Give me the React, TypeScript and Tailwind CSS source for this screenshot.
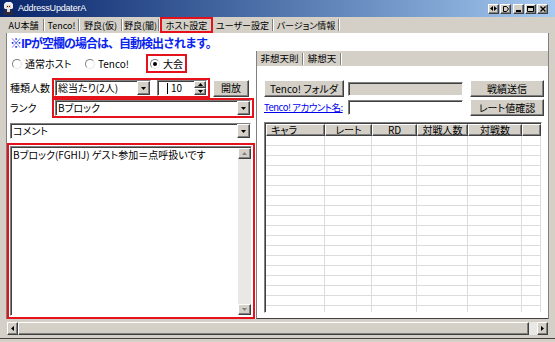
import React from "react";

const raised = "border border-t-white border-l-white border-r-[#404040] border-b-[#404040] shadow-[inset_-1px_-1px_0_#808080]";
const sunken = "border border-t-[#808080] border-l-[#808080] border-r-white border-b-white shadow-[inset_1px_1px_0_#404040]";
const face = "bg-[#d4d0c8]";
const red = "border-2 border-[#e5121b]";

type Dir = "up" | "down" | "left" | "right";

function Tri({ dir, color = "#000", small }: { dir: Dir; color?: string; small?: boolean }) {
    const a = small ? 5 : 7;
    const b = small ? 3 : 4;
    if (dir === "up" || dir === "down") {
        return (
            <svg width={a} height={b} viewBox={`0 0 ${a} ${b}`}>
                <polygon points={dir === "down" ? `0,0 ${a},0 ${a / 2},${b}` : `0,${b} ${a},${b} ${a / 2},0`} fill={color} />
            </svg>
        );
    }
    return (
        <svg width={b} height={a} viewBox={`0 0 ${b} ${a}`}>
            <polygon points={dir === "right" ? `0,0 ${b},${a / 2} 0,${a}` : `${b},0 0,${a / 2} ${b},${a}`} fill={color} />
        </svg>
    );
}

function AppIcon() {
    return (
        <svg width="11" height="13" viewBox="0 0 11 13" className="ml-[3px] shrink-0">
            <path d="M3 0h5l2 2v4l-1 1H2L1 6V2z" fill="#e8ecf4" />
            <path d="M3 3h5v3H3z" fill="#f2d2b6" />
            <path d="M4 4h1v1H4zM6 4h1v1H6z" fill="#202030" />
            <path d="M2 7h7l2 6H0z" fill="#2a2a3a" />
            <path d="M4 7h3v3H4z" fill="#d8dce8" />
        </svg>
    );
}

function CapBtn({ children, className = "" }: { children: React.ReactNode; className?: string }) {
    return (
        <div className={`${raised} ${face} w-[11px] h-[10px] flex items-center justify-center ${className}`}>
            {children}
        </div>
    );
}

function TitleBar() {
    return (
        <div className="h-[17px] shrink-0 flex items-center bg-linear-to-r from-[#0a246a] to-[#a6caf0]">
            <AppIcon />
            <span className="ml-[4px] text-white text-[9px] leading-none font-['Liberation_Sans',sans-serif] tracking-[-0.2px]">AddressUpdaterA</span>
            <div className="ml-auto mr-[7px] flex gap-[1px]">
                <CapBtn>
                    <svg width="7" height="5" viewBox="0 0 7 5">
                        <polygon points="0,2.5 3,0 3,5" fill="#000" />
                        <polygon points="7,2.5 4,0 4,5" fill="#000" />
                    </svg>
                </CapBtn>
                <CapBtn>
                    <svg width="6" height="6" viewBox="0 0 6 6">
                        <path d="M0.5 0.5h3l2 2.5-2 2.5h-3z" fill="none" stroke="#000" />
                    </svg>
                </CapBtn>
                <CapBtn className="ml-[1px]">
                    <svg width="6" height="6" viewBox="0 0 6 6">
                        <rect x="0" y="4" width="5" height="2" fill="#000" />
                    </svg>
                </CapBtn>
                <CapBtn>
                    <svg width="7" height="6" viewBox="0 0 7 6">
                        <path d="M0.5 0.5h6v5h-6z" fill="none" stroke="#000" />
                        <rect x="0" y="0" width="7" height="2" fill="#000" />
                    </svg>
                </CapBtn>
                <CapBtn>
                    <svg width="6" height="6" viewBox="0 0 6 6">
                        <path d="M0.5 0.5l5 5M5.5 0.5l-5 5" stroke="#000" strokeWidth="1.4" />
                    </svg>
                </CapBtn>
            </div>
        </div>
    );
}

function Sep() {
    return <div className="w-[2px] h-[12px] shrink-0 border-l border-l-[#808080] border-r border-r-white" />;
}

function MainTabs() {
    return (
        <div className="h-[16px] shrink-0 flex items-center pl-[4px] text-[9px] leading-none whitespace-nowrap">
            <div className="w-[39px] text-center">AU本舗</div>
            <Sep />
            <div className="w-[33px] text-center">Tenco!</div>
            <Sep />
            <div className="w-[41px] text-center">野良(仮)</div>
            <Sep />
            <div className="w-[35px] text-center">野良(闇)</div>
            <Sep />
            <div className={`${red} w-[53px] h-[16px] flex items-center justify-center`}>ホスト設定</div>
            <div className="w-[59px] text-center">ユーザー設定</div>
            <Sep />
            <div className="w-[64px] text-center">バージョン情報</div>
            <Sep />
        </div>
    );
}

function Radio({ checked }: { checked?: boolean }) {
    return (
        <span className="shrink-0 w-[10px] h-[10px] rounded-full bg-white border border-t-[#808080] border-l-[#808080] border-r-[#e4e4e4] border-b-[#e4e4e4] flex items-center justify-center">
            {checked && <span className="w-[4px] h-[4px] rounded-full bg-black" />}
        </span>
    );
}

function Combo({ text, className = "" }: { text: string; className?: string }) {
    return (
        <div className={`${sunken} bg-white h-[16px] flex ${className}`}>
            <div className="flex-1 flex items-center pl-[2px] text-[10px] leading-none whitespace-nowrap overflow-hidden">{text}</div>
            <div className={`${raised} ${face} w-[13px] flex items-center justify-center`}>
                <Tri dir="down" small />
            </div>
        </div>
    );
}

function Spin() {
    return (
        <div className={`${sunken} bg-white w-[50px] h-[16px] flex`}>
            <div className="flex-1 flex items-center pl-[9px] text-[10px] leading-none">
                <span className="w-px h-[11px] bg-black mr-[3px]" />
                10
            </div>
            <div className="w-[12px] flex flex-col">
                <div className={`${raised} ${face} flex-1 flex items-center justify-center`}>
                    <Tri dir="up" small />
                </div>
                <div className={`${raised} ${face} flex-1 flex items-center justify-center`}>
                    <Tri dir="down" small />
                </div>
            </div>
        </div>
    );
}

function Button({ children, className = "" }: { children: React.ReactNode; className?: string }) {
    return (
        <div className={`${raised} ${face} h-[17px] shrink-0 flex items-center justify-center text-[10px] leading-none whitespace-nowrap ${className}`}>
            {children}
        </div>
    );
}

function ArrowBtn({ dir }: { dir: Dir }) {
    return (
        <div className={`${raised} ${face} h-[11px] shrink-0 flex items-center justify-center`}>
            <Tri dir={dir} color="#808080" small />
        </div>
    );
}

function LeftColumn() {
    return (
        <div className="w-[249px] shrink-0 flex flex-col">
            <div className="mt-[3px] h-[14px] pl-[3px] text-[12px] leading-[14px] font-bold tracking-[-1px] text-[#0a24f0] [font-feature-settings:normal] whitespace-nowrap">
                ※IPが空欄の場合は、自動検出されます。
            </div>
            <div className="mt-[4px] h-[19px] flex items-center text-[10px] leading-none">
                <div className="w-[78px] pl-[5px] flex items-center gap-[3px]">
                    <Radio />
                    通常ホスト
                </div>
                <div className="w-[61px] flex items-center gap-[3px]">
                    <Radio />
                    Tenco!
                </div>
                <div className={`${red} w-[41px] h-[19px] pl-[2px] flex items-center gap-[3px]`}>
                    <Radio checked />
                    大会
                </div>
            </div>
            <div className="mt-[5px] h-[20px] flex items-center text-[10px] leading-none">
                <div className="w-[45px] pl-[3px]">種類人数</div>
                <div className={`${red} w-[158px] h-[20px] pl-[1px] flex items-center gap-[6px]`}>
                    <Combo text="総当たり(2人)" className="w-[96px]" />
                    <Spin />
                </div>
                <Button className="ml-[3px] w-[36px]">開放</Button>
            </div>
            <div className="h-[20px] flex items-center text-[10px] leading-none">
                <div className="w-[45px] pl-[3px]">ランク</div>
                <div className={`${red} w-[202px] h-[20px] pl-[1px] flex items-center`}>
                    <Combo text="Bブロック" className="w-[196px]" />
                </div>
            </div>
            <Combo text="コメント" className="mt-[5px] ml-[3px] w-[241px]" />
            <div className={`${red} mt-[4px] w-[248px] h-[176px] p-[1px]`}>
                <div className={`${sunken} bg-white h-full flex`}>
                    <div className="flex-1 pl-[2px] pt-[2px] text-[10px] leading-[12px] whitespace-nowrap">
                        Bブロック(FGHIJ) ゲスト参加＝点呼扱いです
                    </div>
                    <div className="w-[13px] mt-[1px] flex flex-col bg-[#eae8e4]">
                        <ArrowBtn dir="up" />
                        <div className="flex-1" />
                        <ArrowBtn dir="down" />
                    </div>
                </div>
            </div>
        </div>
    );
}

const cols = [
    { label: "キャラ", w: "w-[59px]", align: "justify-start pl-[4px]" },
    { label: "レート", w: "w-[47px]", align: "justify-center" },
    { label: "RD", w: "w-[45px]", align: "justify-center" },
    { label: "対戦人数", w: "w-[51px]", align: "justify-center" },
    { label: "対戦数", w: "w-[54px]", align: "justify-center" },
    { label: "", w: "flex-1", align: "justify-center" },
];

const rows = Array.from({ length: 18 }, (_, i) => i);

function RightColumn() {
    return (
        <div className="flex-1 flex flex-col">
            <div className="mt-[18px] h-[15px] shrink-0 bg-[#d4d0c8] border-l border-l-[#808080] flex items-center text-[9.5px] leading-none whitespace-nowrap">
                <div className="w-[45px] text-center">非想天則</div>
                <Sep />
                <div className="w-[36px] text-center">緋想天</div>
                <Sep />
            </div>
            <div className="flex-1 border-l border-l-[#808080] border-b border-b-[#404040] pl-[7px] pt-[14px] flex flex-col text-[10px] leading-none">
                <div className="h-[17px] flex items-center">
                    <Button className="w-[80px]">Tenco! フォルダ</Button>
                    <div className={`${sunken} ${face} ml-[4px] w-[115px] h-[14px]`} />
                    <Button className="ml-[7px] w-[74px]">戦績送信</Button>
                </div>
                <div className="mt-[2px] h-[17px] flex items-center">
                    <div className="w-[80px] text-[9.5px] text-[#0000ee] underline whitespace-nowrap tracking-[-0.5px]">Tenco! アカウント名:</div>
                    <div className={`${sunken} bg-white ml-[4px] w-[115px] h-[15px]`} />
                    <Button className="ml-[7px] w-[74px]">レート値確認</Button>
                </div>
                <div className={`${sunken} bg-white mt-[6px] w-[278px] h-[191px] pl-[1px] pt-[1px] overflow-hidden flex flex-col`}>
                    <div className="flex h-[12px] shrink-0">
                        {cols.map((c, i) => (
                            <div key={i} className={`${raised} ${face} ${c.w} ${c.align} flex items-center text-[10px] leading-none whitespace-nowrap`}>
                                {c.label}
                            </div>
                        ))}
                    </div>
                    {rows.map((r) => (
                        <div key={r} className="flex h-[10px] shrink-0 border-b border-b-[#dcdcdc]">
                            {cols.map((c, i) => (
                                <div key={i} className={`${c.w} border-r border-r-[#dcdcdc]`} />
                            ))}
                        </div>
                    ))}
                </div>
            </div>
        </div>
    );
}

function HScroll() {
    return (
        <div className="mt-[3px] ml-[7px] w-[541px] h-[13px] shrink-0 flex bg-[#eae8e4]">
            <div className={`${raised} ${face} w-[11px] flex items-center justify-center`}>
                <Tri dir="left" small />
            </div>
            <div className={`${raised} ${face} flex-1`} />
            <div className="w-[8px]" />
            <div className={`${raised} ${face} w-[11px] flex items-center justify-center`}>
                <Tri dir="right" small />
            </div>
        </div>
    );
}

export default function App() {
    return (
        <div className="w-[555px] h-[342px] bg-[#d4d0c8] flex flex-col overflow-hidden text-black font-['Noto_Sans_CJK_JP','Noto_Sans_CJK_SC',sans-serif] [font-feature-settings:'palt']">
            <TitleBar />
            <MainTabs />
            <div className="ml-[6px] w-[543px] h-[286px] shrink-0 bg-white border-l border-l-[#808080] border-r border-r-[#808080] flex">
                <LeftColumn />
                <RightColumn />
            </div>
            <HScroll />
            <div className="mt-[3px] h-px shrink-0 bg-[#404040]" />
        </div>
    );
}
